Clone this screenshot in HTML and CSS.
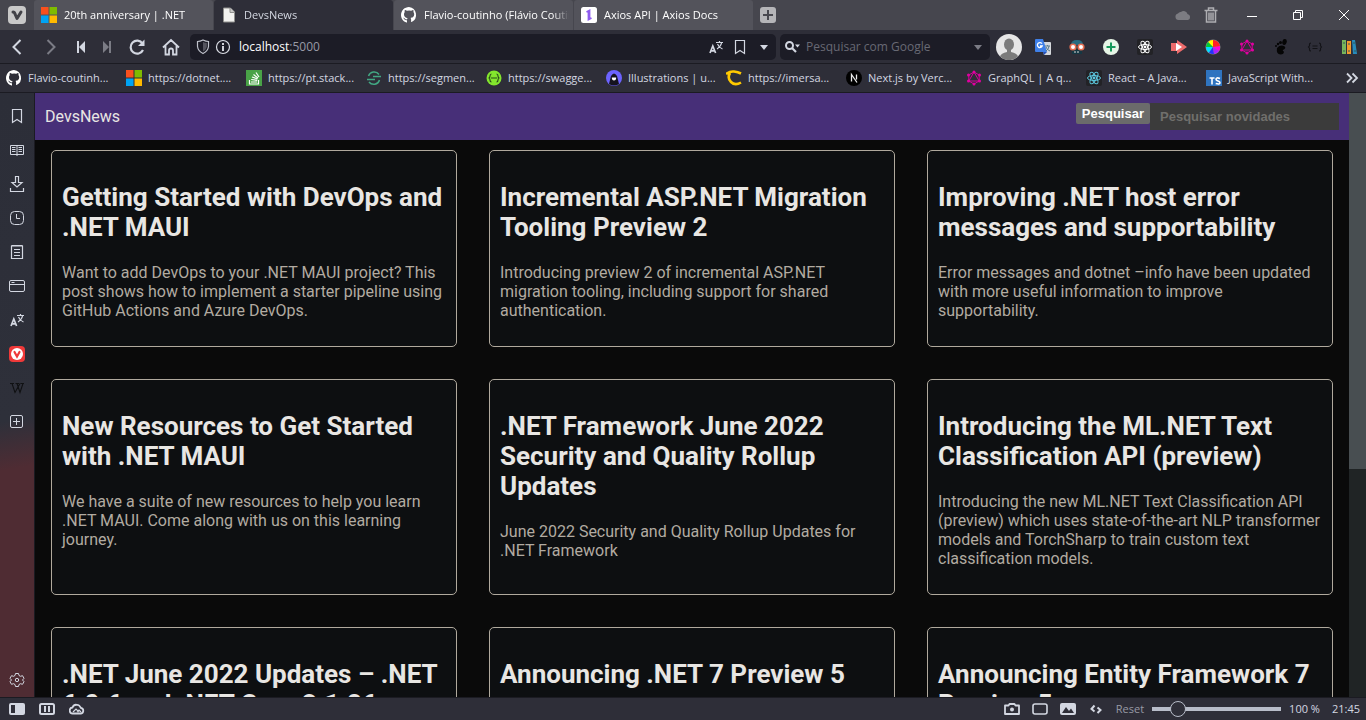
FILE: index.html
```html
<!DOCTYPE html>
<html lang="pt-BR">
<head>
<meta charset="utf-8">
<title>DevsNews</title>
<link rel="stylesheet" href="styles.css">
</head>
<body>
<svg class="defs" aria-hidden="true">
  <symbol id="github" viewBox="0 0 16 16"><path fill="#fff" d="M8 0C3.6 0 0 3.6 0 8c0 3.5 2.3 6.500 5.500 7.600.4.100.5-.2.5-.4v-2c-2 .4-2.600-.9-2.600-.9-.4-.9-.9-1.100-.9-1.100-.7-.5.1-.5.1-.5.8.1 1.200.8 1.200.8.7 1.200 1.900.9 2.300.7.1-.5.3-.9.5-1.100-1.800-.2-3.600-.9-3.600-4 0-.9.3-1.600.8-2.100-.1-.2-.4-1 .1-2.100 0 0 .7-.2 2.200.8a7.600 7.600 0 0 1 4 0c1.500-1 2.200-.8 2.200-.8.4 1.100.2 1.900.1 2.100.5.6.8 1.300.8 2.100 0 3.100-1.900 3.700-3.700 3.900.3.300.6.800.6 1.500v2.200c0 .2.1.5.5.4A8 8 0 0 0 8 0z"/></symbol>
  <symbol id="windows" viewBox="0 0 16 16"><path fill="#f8501d" d="M0 0h7.500v7.500H0z"/><path fill="#7fbb00" d="M8.500 0H16v7.500H8.500z"/><path fill="#00a3f3" d="M0 8.500h7.500V16H0z"/><path fill="#ffba00" d="M8.500 8.500H16V16H8.500z"/></symbol>
  <symbol id="react" viewBox="0 0 16 16"><g fill="none" stroke="currentColor"><ellipse cx="8" cy="8" rx="6.500" ry="2.500"/><ellipse cx="8" cy="8" rx="6.500" ry="2.500" transform="rotate(60 8 8)"/><ellipse cx="8" cy="8" rx="6.500" ry="2.500" transform="rotate(120 8 8)"/></g><circle cx="8" cy="8" r="1.400" fill="currentColor"/></symbol>
  <symbol id="graphql" viewBox="0 0 16 16"><path fill="none" stroke="#d6009a" d="M8 2l5.200 3v6L8 14l-5.200-3V5zM8 2l5.200 9H2.800z"/><g fill="#e100a0"><circle cx="8" cy="2" r="1.500"/><circle cx="13.500" cy="5" r="1.500"/><circle cx="13.500" cy="11" r="1.500"/><circle cx="8" cy="14" r="1.500"/><circle cx="2.500" cy="11" r="1.500"/><circle cx="2.500" cy="5" r="1.500"/></g></symbol>
  <symbol id="bookmark" viewBox="0 0 16 16"><path fill="none" stroke="currentColor" stroke-width="1.200" d="M3.500 1.500h9v13L8 11.500l-4.500 3z"/></symbol>
  <symbol id="translate" viewBox="0 0 16 16"><path fill="none" stroke="currentColor" stroke-width="1.700" d="M2 14l2.800-7 2.800 7M3 11.800h4"/><path fill="none" stroke="currentColor" stroke-width="1.200" d="M8 3.500h7M11.500 2v1.500M9 10c2.500-1.500 4-3.500 4.500-6M9.500 5c1 2.500 2.500 4 5 5"/></symbol>
</svg>

<div class="browser">
  <div class="tabs">
    <button class="menu" aria-label="Menu"><svg class="i18" viewBox="0 0 18 18"><rect width="18" height="18" rx="4" fill="#c8c8c8"/><path d="M5 6q1.500 0 2 2l2 4.500L13 6" fill="none" stroke="#414147" stroke-width="3" stroke-linecap="round" stroke-linejoin="round"/></svg></button>
    <button class="tab"><svg class="i16"><use href="#windows"/></svg><span>20th anniversary | .NET</span></button>
    <button class="tab active"><svg class="i16" viewBox="0 0 16 16"><path d="M2.500 1h7L13.500 5v10h-11z" fill="#f2f2f0" stroke="#8e8e8c"/><path d="M9 1v4.500h4.500" fill="#c9c9c7" stroke="#8e8e8c"/></svg><span>DevsNews</span></button>
    <button class="tab"><svg class="i16"><use href="#github"/></svg><span>Flavio-coutinho (Flávio Coutinho)</span></button>
    <button class="tab"><svg class="i16" viewBox="0 0 16 16"><rect width="16" height="16" rx="2.500" fill="#fff"/><path d="M5.500 5L8.500 3.500v9M7.500 4v8.500L10.500 11" stroke="#8f5cf0" stroke-width="1.800" fill="none"/></svg><span>Axios API | Axios Docs</span></button>
    <button class="newtab" aria-label="Nova aba"><svg class="i16" viewBox="0 0 16 16"><rect width="16" height="16" rx="3" fill="#b5b5b8"/><path d="M8 3v10M3 8h10" stroke="#48484f" stroke-width="2"/></svg></button>
    <div class="window">
      <button aria-label="Sincronizar"><svg class="i16" viewBox="0 0 16 16"><path fill="#7c7c82" d="M3.500 13a3.300 3.300 0 0 1-.5-6.500 3 3 0 0 1 3-1.500 4 4 0 0 1 6.500 2A3.100 3.100 0 0 1 13 13z"/></svg></button>
      <button aria-label="Lixeira"><svg class="i16" viewBox="0 0 16 16"><path fill="none" stroke="#aeaeb2" stroke-width="1.500" d="M1.500 3.500h13M5.500 3V1h5v2M3.500 4v11h9V4M6 5.500v8M8 5.500v8M10 5.500v8"/></svg></button>
      <button aria-label="Minimizar"><svg class="i16" viewBox="0 0 16 16"><path stroke="#fff" d="M3 9.500h10"/></svg></button>
      <button aria-label="Restaurar"><svg class="i16" viewBox="0 0 16 16"><path fill="none" stroke="#fff" d="M3.500 5.500h7v7h-7zM5.500 5V3.500h7v7H11"/></svg></button>
      <button aria-label="Fechar"><svg class="i16" viewBox="0 0 16 16"><path stroke="#fff" d="M3 3l10 10M13 3L3 13"/></svg></button>
    </div>
  </div>

  <div class="toolbar">
    <div class="nav">
      <button aria-label="Voltar"><svg class="i18" viewBox="0 0 18 18"><path d="M12.500 2L5.500 9l7 7" fill="none" stroke="currentColor" stroke-width="2"/></svg></button>
      <button class="dim" aria-label="Avançar"><svg class="i18" viewBox="0 0 18 18"><path d="M5.500 2l7 7-7 7" fill="none" stroke="currentColor" stroke-width="2"/></svg></button>
      <button class="skip" aria-label="Retroceder"><svg class="i18" viewBox="0 0 18 18"><path d="M5 3v12h2V3zM13 3L7 9l6 6z" fill="currentColor"/></svg></button>
      <button class="skip dim" aria-label="Avanço rápido"><svg class="i18" viewBox="0 0 18 18"><path d="M13 3v12h-2V3zM5 3l6 6-6 6z" fill="currentColor"/></svg></button>
      <button aria-label="Recarregar"><svg class="i18" viewBox="0 0 18 18"><path d="M15 12a6.500 6.500 0 1 1-.5-6.500" fill="none" stroke="currentColor" stroke-width="2.200"/><path d="M16.500 1.500V8H10z" fill="currentColor"/></svg></button>
      <button aria-label="Página inicial"><svg class="i18" viewBox="0 0 18 18"><path d="M1 9.500L9 2l8 7.500M3.500 8v8.500H7v-4q0-2 2-2t2 2v4h3.500V8" fill="none" stroke="currentColor" stroke-width="1.800"/></svg></button>
    </div>
    <div class="field address">
      <svg class="i16" viewBox="0 0 16 16"><path d="M8 1q3 1.500 5.500 1.500v5Q13 12 8 14.500 3 12 2.500 7.500v-5Q5 2.500 8 1z" fill="none" stroke="#bfc2cb" stroke-width="1.200"/><path d="M8 3q2 1 3.800 1v4Q11 11 8 12.500z" fill="#55555f"/></svg>
      <svg class="i16" viewBox="0 0 16 16"><circle cx="8" cy="8" r="6.500" fill="none" stroke="#dadde5" stroke-width="1.200"/><path d="M8 7v5M8 4v2" stroke="#e4e6ec" stroke-width="1.800"/></svg>
      <span class="url"><b>localhost</b>:5000</span>
      <svg class="i16"><use href="#translate"/></svg>
      <svg class="i16"><use href="#bookmark"/></svg>
      <svg class="i16" viewBox="0 0 16 16"><path d="M4 6h8l-4 5z" fill="currentColor"/></svg>
    </div>
    <div class="field google">
      <svg class="i16" viewBox="0 0 16 16"><circle cx="5.500" cy="6.500" r="3.500" fill="none" stroke="currentColor" stroke-width="2"/><path d="M8 9l4 4" stroke="currentColor" stroke-width="2.200"/><path d="M11 5.500h5l-2.500 3z" fill="currentColor"/></svg>
      <input type="text" placeholder="Pesquisar com Google" aria-label="Pesquisar com Google">
      <svg class="i16 dim" viewBox="0 0 16 16"><path d="M4 6h8l-4 5z" fill="currentColor"/></svg>
    </div>
    <div class="extensions">
      <button aria-label="Perfil"><svg class="i26" viewBox="0 0 26 26"><circle cx="13" cy="13" r="13" fill="#e6e6e6"/><ellipse cx="13" cy="10.500" rx="5" ry="6" fill="#7b7b7b"/><path d="M11 15h4v3q6 1 7 4.500a13 13 0 0 1-18 0Q5 19 11 18z" fill="#7b7b7b"/></svg></button>
      <button aria-label="Tradutor"><svg class="i16" viewBox="0 0 16 16"><path fill="#d5d8dc" d="M6 3h9q1 0 1 1v11q0 1-1 1H9z"/><path fill="#3f80e8" d="M1 0h7l4 13H1q-1 0-1-1V1q0-1 1-1z"/><path fill="#2550b8" d="M8 13h4l-3 3z"/><path fill="none" stroke="#fff" stroke-width="1.300" d="M7 4.700A2.500 2.500 0 1 0 7.200 7H5"/><path fill="none" stroke="#577b90" d="M10 7h5M12.500 6v1M11 12q3-2 3-5M11 8q1 3 4 4"/></svg></button>
      <button aria-label="Leitor"><svg class="i16" viewBox="0 0 16 16"><path d="M2 6q0-5 6-5t6 5z" fill="#286b80"/><path d="M3 7h10v8H3z" fill="#153743"/><circle cx="4" cy="8" r="2.800" fill="#fff" stroke="#e56e52" stroke-width="1.600"/><circle cx="12" cy="8" r="2.800" fill="#fff" stroke="#e56e52" stroke-width="1.600"/><path d="M5 13h6" stroke="#d9d9d9" stroke-dasharray="2 1"/></svg></button>
      <button aria-label="Adicionar"><svg class="i16" viewBox="0 0 16 16"><circle cx="8" cy="8" r="8" fill="#e7f6e7"/><path d="M8 3.500v9M3.500 8h9" stroke="#16995b" stroke-width="2"/></svg></button>
      <button class="white" aria-label="React"><svg class="i16 tile"><use href="#react"/></svg></button>
      <button aria-label="Gravar"><svg class="i16" viewBox="0 0 16 16"><path fill="#ed6b6b" d="M0 4h6V1l10 7-10 7v-3H0z"/><path fill="#fff" d="M5 4l6 4-6 4z"/></svg></button>
      <button aria-label="Cores"><svg class="i16" viewBox="0 0 16 16"><circle cx="8" cy="8" r="7.500" fill="#888"/><path fill="#f22" d="M8 8L4 2.500A7 7 0 0 1 8 1z"/><path fill="#ff0" d="M8 8V1a7 7 0 0 0-5 2z"/><path fill="#0c3" d="M8 8L3 3a7 7 0 0 0-2 5z"/><path fill="#0df" d="M8 8H1a7 7 0 0 0 3 5.800z"/><path fill="#23f" d="M8 8l-4 5.800A7 7 0 0 0 9 15z"/><path fill="#a2f" d="M8 8l1 7a7 7 0 0 0 5-3z"/><path fill="#f0d" d="M8 8l6 4a7 7 0 0 0 1-5z"/><path fill="#f22" d="M8 8l7-1a7 7 0 0 0-7-6z"/></svg></button>
      <button aria-label="GraphQL"><svg class="i16"><use href="#graphql"/></svg></button>
      <button aria-label="Gnome"><svg class="i16" viewBox="0 0 16 16"><g fill="#050505"><ellipse cx="11.500" cy="3" rx="2.200" ry="3" transform="rotate(15 11.500 3)"/><circle cx="7.500" cy="3.500" r="1.500"/><circle cx="5" cy="5" r="1.200"/><circle cx="3" cy="7" r="1"/><path d="M4 9q3-3.500 7-2 3 2-1 4-1 1 1 1.500 0 3-3.500 3Q3 15 4 9z"/></g></svg></button>
      <button aria-label="JSON"><svg class="i16" viewBox="0 0 16 16"><path fill="none" stroke="#131317" stroke-width="1.100" d="M4 4Q2.500 4 2.500 5v1.800L1.500 8l1 1.200V11Q2.500 12 4 12M12 4q1.500 0 1.500 1v1.800l1 1.200-1 1.200V11q0 1-1.500 1M5.500 7h5M5.500 9.500h5"/></svg></button>
      <button aria-label="Biblioteca"><svg class="i16" viewBox="0 0 16 16"><path fill="#78b55a" d="M1 1h4v14H1z"/><path fill="#f39a2c" d="M6 2h4v13H6z"/><path fill="#278bbb" d="M11 1h3l2 14h-4z"/><path d="M2 4h2M7 5h2M12 4h2M2 12h2M7 12h2M13 12h2" stroke="#315a58"/></svg></button>
    </div>
  </div>

  <nav class="bookmarks" aria-label="Favoritos">
    <a href="#"><svg class="i16"><use href="#github"/></svg><span>Flavio-coutinh...</span></a>
    <a href="#"><svg class="i16"><use href="#windows"/></svg><span>https://dotnet....</span></a>
    <a href="#"><svg class="i16" viewBox="0 0 16 16"><path fill="#49a347" d="M0 0h16v16H0z"/><path d="M3.500 10v4h9v-4M5 12h6M5.200 9.500l6 .8M6 7l5.500 2M7.500 4.500l4.500 3.500M10 2.500l3 4.500" fill="none" stroke="#fff" stroke-width="1.200"/></svg><span>https://pt.stack...</span></a>
    <a href="#"><svg class="i16" viewBox="0 0 16 16"><path fill="none" stroke="#42a783" stroke-width="1.500" d="M13 4.500A6 6 0 0 0 2.500 6M7 6.500h8M1 9.500h8M13.500 10A6 6 0 0 1 3 12"/></svg><span>https://segmen...</span></a>
    <a href="#"><svg class="i16" viewBox="0 0 16 16"><circle cx="8" cy="8" r="7.500" fill="#83e62d"/><path d="M5.500 4Q4 4 4 6t-1.500 2Q4 8 4 10t1.500 2M10.500 4Q12 4 12 6t1.500 2Q12 8 12 10t-1.500 2M5 8h6" fill="none" stroke="#29491b" stroke-width="1.200"/></svg><span>https://swagge...</span></a>
    <a href="#"><svg class="i16" viewBox="0 0 16 16"><circle cx="8" cy="8" r="8" fill="#6c63ff"/><path d="M3 14q1-4 2-8 3-5 6 0 1 4 2 8-5 3-10 0z" fill="#15131f"/><path d="M5.800 7.500h4.400q0 3-2.200 3t-2.200-3z" fill="#fff"/></svg><span>Illustrations | u...</span></a>
    <a href="#"><svg class="i16" viewBox="0 0 16 16"><path d="M0 4q4-3 8-2.500 4 .5 7 2M4 3Q1 8 5 12q4 4 10 .5" fill="none" stroke="#ffc900" stroke-width="2.600"/></svg><span>https://imersa...</span></a>
    <a href="#"><svg class="i16" viewBox="0 0 16 16"><circle cx="8" cy="8" r="8" fill="#000"/><path d="M5.500 11.500v-7l5.500 8M10.500 4.500v5" fill="none" stroke="#e8e8e8" stroke-width="1.300"/></svg><span>Next.js by Verc...</span></a>
    <a href="#"><svg class="i16"><use href="#graphql"/></svg><span>GraphQL | A q...</span></a>
    <a href="#"><svg class="i16 tile cyan"><use href="#react"/></svg><span>React – A Java...</span></a>
    <a href="#"><svg class="i16" viewBox="0 0 16 16"><path fill="#2f74c0" d="M0 0h16v16H0z"/><path fill="none" stroke="#fff" stroke-width="1.600" d="M3.500 8h5M6 8v6.500M14 8.500q-4-1.500-4 .8 0 1 2 1.700t2 1.800q0 2-4.300.8"/></svg><span>JavaScript With...</span></a>
    <button class="more" aria-label="Mais favoritos"><svg class="i16" viewBox="0 0 16 16"><path d="M3 3.500L7.500 8 3 12.500M8.500 3.500L13 8l-4.500 4.500" fill="none" stroke="currentColor" stroke-width="1.800"/></svg></button>
  </nav>

  <div class="middle">
    <aside class="panel">
      <button aria-label="Favoritos"><svg class="i16"><use href="#bookmark"/></svg></button>
      <button aria-label="Lista de leitura"><svg class="i16" viewBox="0 0 16 16"><path d="M1.500 3.500h13v9h-13zM8 3v11M3 5.500h3.500M3 7.500h3.500M3 9.500h3.500M9.500 5.500H13M9.500 7.500H13M9.500 9.500H13" fill="none" stroke="currentColor"/></svg></button>
      <button aria-label="Transferências"><svg class="i16" viewBox="0 0 16 16"><path d="M6.500.500h3v6H13l-5 4.500-5-4.500h3.500zM1.500 12v3.500h13V12" fill="none" stroke="currentColor" stroke-width="1.200"/></svg></button>
      <button aria-label="Histórico"><svg class="i16" viewBox="0 0 16 16"><rect x="1.500" y="1.500" width="13" height="13" rx="4" fill="none" stroke="currentColor"/><path d="M7.500 4v4.500H11" fill="none" stroke="currentColor"/></svg></button>
      <button aria-label="Notas"><svg class="i16" viewBox="0 0 16 16"><path d="M2.500 2h11v12.500h-11zM2.500 1.500h11M5 5.500h6M5 8.500h6M5 11.500h6" fill="none" stroke="currentColor" stroke-width="1.200"/></svg></button>
      <button aria-label="Janelas"><svg class="i16" viewBox="0 0 16 16"><rect x=".5" y="2.500" width="15" height="11" rx="1.500" fill="none" stroke="currentColor"/><path d="M1 6.500h14M2.500 4.500h3" stroke="currentColor"/></svg></button>
      <button aria-label="Traduzir"><svg class="i16"><use href="#translate"/></svg></button>
      <button aria-label="Vivaldi"><svg class="i16" viewBox="0 0 16 16"><rect width="16" height="16" rx="4" fill="#ef3939"/><circle cx="8" cy="8" r="6" fill="#fff"/><path d="M5.500 6l2.500 4.500L10.500 6" fill="none" stroke="#ef3939" stroke-width="2.200" stroke-linecap="round"/></svg></button>
      <button aria-label="Wikipédia"><svg class="i16" viewBox="0 0 16 16"><path d="M1 3.500h4M6.500 3.500h3.500M11.500 3.500H15M3 3.500l3 9 5-9M8 3.500l3 9 3-9" fill="none" stroke="#101113" stroke-width="1.100"/></svg></button>
      <button aria-label="Adicionar painel"><svg class="i16" viewBox="0 0 16 16"><rect x="1.500" y="1.500" width="12" height="12" rx="1.500" fill="none" stroke="currentColor"/><path d="M7.500 4v7M4 7.500h7" stroke="currentColor"/></svg></button>
      <button class="settings" aria-label="Configurações"><svg class="i16" viewBox="0 0 16 16"><path d="M6.500 1.500h3l.5 2 1.500.8 2-.6 1.500 2.600L13.500 8l1.500 1.700-1.500 2.600-2-.6-1.500.8-.5 2h-3l-.5-2-1.500-.8-2 .6L1 9.700 2.500 8 1 6.300l1.500-2.600 2 .6L6 3.500z" fill="none" stroke="currentColor"/><circle cx="8" cy="8" r="1.700" fill="none" stroke="currentColor"/></svg></button>
    </aside>

    <div class="page">
      <header class="site-header">
        <a class="brand" href="#">DevsNews</a>
        <form class="search"><button type="button">Pesquisar</button><input type="text" placeholder="Pesquisar novidades" aria-label="Pesquisar novidades"></form>
      </header>
      <main class="news">
        <article><h2>Getting Started with DevOps and .NET MAUI</h2><p>Want to add DevOps to your .NET MAUI project? This post shows how to implement a starter pipeline using GitHub Actions and Azure DevOps.</p></article>
        <article><h2>Incremental ASP.NET Migration Tooling Preview 2</h2><p>Introducing preview 2 of incremental ASP.NET migration tooling, including support for shared authentication.</p></article>
        <article><h2>Improving .NET host error messages and supportability</h2><p>Error messages and dotnet –info have been updated with more useful information to improve supportability.</p></article>
        <article><h2>New Resources to Get Started with .NET MAUI</h2><p>We have a suite of new resources to help you learn .NET MAUI. Come along with us on this learning journey.</p></article>
        <article><h2>.NET Framework June 2022 Security and Quality Rollup Updates</h2><p>June 2022 Security and Quality Rollup Updates for .NET Framework</p></article>
        <article><h2>Introducing the ML.NET Text Classification API (preview)</h2><p>Introducing the new ML.NET Text Classification API (preview) which uses state-of-the-art NLP transformer models and TorchSharp to train custom text classification models.</p></article>
        <article><h2>.NET June 2022 Updates – .NET 6.0.6 and .NET Core 3.1.26</h2></article>
        <article><h2>Announcing .NET 7 Preview 5</h2></article>
        <article><h2>Announcing Entity Framework 7 Preview 5</h2></article>
      </main>
    </div>
    <div class="scrollbar"><div class="thumb"></div></div>
  </div>

  <footer class="status">
    <div class="group left">
      <button aria-label="Painel"><svg class="i16" viewBox="0 0 16 16"><rect y="2" width="16" height="12" rx="2" fill="currentColor"/><path d="M2 4h4v8H2z" fill="#2e2e38"/></svg></button>
      <button aria-label="Lado a lado"><svg class="i16" viewBox="0 0 16 16"><rect x="1" y="3" width="14" height="10" rx="1.500" fill="none" stroke="currentColor" stroke-width="2"/><path d="M6 5v6M10 5v6" stroke="currentColor" stroke-width="2"/></svg></button>
      <button aria-label="Nuvem"><svg class="i16" viewBox="0 0 16 16"><path d="M4 12.500a3 3 0 0 1-.5-6Q5 3 8.500 4 10 3.500 12 7a2.800 2.800 0 0 1 0 5.500z" fill="none" stroke="currentColor" stroke-width="1.800"/><path d="M4 11l3-3 3 3M8 11l2-2 2 2" fill="none" stroke="currentColor" stroke-width="1.200"/></svg></button>
    </div>
    <div class="group">
      <button aria-label="Captura"><svg class="i16" viewBox="0 0 16 16"><path d="M1 4.500h3.500L5.500 3h5l1 1.500H15v8.500H1z" fill="none" stroke="currentColor" stroke-width="1.800" stroke-linejoin="round"/><circle cx="8" cy="8.500" r="2" fill="currentColor"/></svg></button>
      <button aria-label="Janela"><svg class="i16" viewBox="0 0 16 16"><rect x="1" y="3" width="14" height="10" rx="2" fill="none" stroke="currentColor" stroke-width="1.600"/></svg></button>
      <button aria-label="Imagens"><svg class="i16" viewBox="0 0 16 16"><rect y="2" width="16" height="12" rx="2" fill="currentColor"/><path d="M2 12l4-6 3 4 2-2.500 3 4.500z" fill="#2e2e38"/></svg></button>
      <button aria-label="Ações de página"><svg class="i16" viewBox="0 0 16 16"><path d="M6.500 4.500L3.500 8l3 2.500M9.500 6.500l3 2.500-3 3" fill="none" stroke="currentColor" stroke-width="2"/></svg></button>
    </div>
    <div class="zoom-group">
      <button class="reset">Reset</button>
      <input class="zoom" type="range" min="0" max="100" value="16" aria-label="Zoom">
      <span>100 %</span>
    </div>
    <span>21:45</span>
  </footer>
</div>
</body>
</html>
```
FILE: styles.css
```css
* { box-sizing: border-box; }
body { margin: 0; background: #2e2e38; }
button { border: 0; padding: 0; background: none; color: inherit; font: inherit; }
input { font: inherit; }
a { color: inherit; text-decoration: none; }
svg { display: block; flex: none; }
.defs { display: none; }
.i16 { width: 16px; height: 16px; }
.i18 { width: 18px; height: 18px; }
.i26 { width: 26px; height: 26px; }

.browser {
  display: flex;
  flex-direction: column;
  height: 100vh;
  overflow: hidden;
  color: #d3d7e1;
  font: 12px/16px "Open Sans", "Noto Sans", sans-serif;
}
.browser .dim { color: #7b7c85; }

.tabs { display: flex; flex: none; height: 30px; background: #46464e; font-size: 11px; }
.menu { display: grid; place-items: center; width: 34px; }
.tab {
  display: flex;
  align-items: center;
  gap: 7px;
  flex: 0 1 179px;
  min-width: 0;
  margin-right: 1px;
  padding: 0 4px 0 7px;
  border-radius: 3px 3px 0 0;
  background: #53535b;
  color: #fff;
  overflow: hidden;
}
.tab span {
  flex: 1;
  overflow: hidden;
  white-space: nowrap;
  text-align: left;
  mask-image: linear-gradient(to left, transparent, #000 16px);
}
.tab.active { background: #2e2e38; color: #d3d7e1; }
.newtab { padding: 0 6px; }
.window { display: flex; margin-left: auto; padding-right: 7px; }
.window button { display: grid; place-items: center; width: 46px; }
.window button:nth-child(-n+2) { width: 28px; }
.window button:nth-child(2) { margin-right: 4px; }
.window button:last-child { width: 30px; margin-left: 8px; }

.toolbar {
  display: flex;
  align-items: center;
  flex: none;
  height: 34px;
  border-bottom: 1px solid #1b1b22;
}
.nav { display: flex; width: 190px; }
.nav button { display: grid; place-items: center; width: 34px; height: 30px; }
.nav .skip { width: 26px; }
.field {
  display: flex;
  align-items: center;
  height: 26px;
  border-radius: 5px;
  background: #1c1c26;
}
.address { flex: 1; gap: 8px; padding: 0 4px 0 5px; }
.address svg:first-child { margin-right: -4px; }
.url { flex: 1; color: #989aa5; }
.url b { color: #fff; font-weight: 400; }
.google { gap: 6px; width: 210px; margin-left: 4px; padding: 0 4px; }
.google input {
  flex: 1;
  min-width: 0;
  padding: 0;
  border: 0;
  outline: 0;
  background: none;
  color: inherit;
}
.google input::placeholder { color: #686974; opacity: 1; }
.extensions { display: flex; width: 376px; padding-left: 2px; }
.extensions button { display: grid; place-items: center; width: 34px; height: 30px; }
.tile { background: #222226; border-radius: 2px; }
.white { color: #fff; }
.cyan { color: #5cc7dd; }

.bookmarks {
  display: flex;
  align-items: center;
  flex: none;
  height: 29px;
  padding-left: 6px;
  border-bottom: 1px solid #1b1b22;
  font-size: 11px;
}
.bookmarks a { display: flex; align-items: center; gap: 6px; flex: 0 0 120px; white-space: nowrap; }
.more { margin-left: auto; padding-right: 6px; }

.middle { display: flex; flex: 1; min-height: 0; }
.panel {
  display: flex;
  flex-direction: column;
  align-items: center;
  width: 35px;
  padding: 6px 0 0;
  border-right: 1px solid #1b1b22;
  background: linear-gradient(170deg, #2c2e38 0, #2e303a 54%, #4f2c33 62%, #4f2c33 100%);
}
.panel button { display: grid; place-items: center; width: 34px; height: 34px; flex: none; }
.panel .settings { margin-top: auto; }

.page {
  flex: 1;
  min-width: 0;
  overflow: hidden;
  background: #0a0a0a;
  font: 16px/19px Roboto, sans-serif;
}
.site-header {
  display: flex;
  justify-content: space-between;
  align-items: flex-start;
  padding: 10px;
  background: #472f78;
}
.brand { color: #e8e6e3; line-height: 27px; }
.search { display: flex; align-items: flex-start; font: bold 13px/15px "Liberation Sans", sans-serif; }
.search button { padding: 3px 6px; border-radius: 2px; background: #6b6b6b; color: #fff; }
.search input {
  width: 189px;
  height: 27px;
  padding: 0 10px;
  border: 0;
  background: #3b3b3b;
  color: #e8e6e3;
}
.search input::placeholder { color: #706f6c; opacity: 1; }
.news {
  display: grid;
  grid-template-columns: repeat(3, minmax(0, 1fr));
  gap: 32px;
  padding: 10px 16px;
}
.news article {
  padding: 10px;
  border: 1px solid #b0a99d;
  border-radius: 5px;
  background: #0d0f11;
}
.news h2 { margin: 21px 0; color: #e8e6e3; font-size: 26px; line-height: 30px; }
.news p { margin: 0 0 16px; color: #b2aba1; }
.scrollbar { width: 17px; background: #202425; }
.thumb { height: 62.3%; background: #484e51; }

.status {
  display: flex;
  align-items: center;
  flex: none;
  gap: 12px;
  height: 23px;
  padding: 0 6px 0 9px;
  border-top: 1px solid #1b1b22;
  font-size: 11px;
}
.group { display: flex; gap: 12px; }
.left { gap: 14px; margin-right: auto; }
.zoom-group { display: flex; align-items: center; gap: 8px; }
.reset { color: #989aa5; }
.zoom {
  appearance: none;
  width: 129px;
  height: 16px;
  margin: 0;
  background: linear-gradient(#b8bdc9, #b8bdc9) center / 100% 4px no-repeat;
}
.zoom::-webkit-slider-thumb {
  appearance: none;
  width: 16px;
  height: 16px;
  border: 1px solid #b8bdc9;
  border-radius: 50%;
  background: #2e2e38;
}
```
